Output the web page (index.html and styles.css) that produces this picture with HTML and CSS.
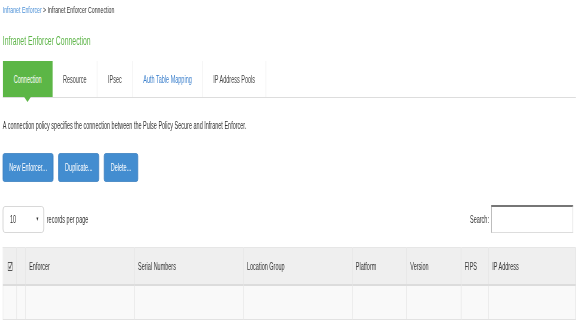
FILE: index.html
```html
<!DOCTYPE html>
<html lang="en">
<head>
    <meta charset="UTF-8">
    <title>Infranet Enforcer Connection</title>
    <link rel="stylesheet" href="styles.css">
</head>
<body>
<div class="frame">
<div class="page">
    <div class="breadcrumb"><a href="#">Infranet Enforcer</a> &gt; Infranet Enforcer Connection</div>

    <h1>Infranet Enforcer Connection</h1>

    <ul class="tabs">
        <li class="active"><a href="#">Connection</a></li>
        <li><a href="#">Resource</a></li>
        <li><a href="#">IPsec</a></li>
        <li class="link"><a href="#">Auth Table Mapping</a></li>
        <li><a href="#">IP Address Pools</a></li>
    </ul>

    <p class="desc">A connection policy specifies the connection between the Pulse Policy Secure and Infranet Enforcer.</p>

    <div class="actions">
        <button class="btn">New Enforcer...</button>
        <button class="btn">Duplicate...</button>
        <button class="btn">Delete...</button>
    </div>

    <div class="controls">
        <div class="length">
            <div class="select"><span>10</span><span class="arrow">&#9660;</span></div>
            <span>records per page</span>
        </div>
        <label class="search">Search: <input type="text"></label>
    </div>

    <table class="grid">
        <thead>
            <tr>
                <th class="col-check">
                    <svg width="9" height="10" viewBox="0 0 9 10">
                        <rect x="0.5" y="1.5" width="8" height="8" fill="none" stroke="#555"/>
                        <path d="M2 5.5 L4 7.5 L8 1" fill="none" stroke="#555" stroke-width="1.2"/>
                    </svg>
                </th>
                <th class="col-expand"></th>
                <th class="col-wide">Enforcer</th>
                <th class="col-wide">Serial Numbers</th>
                <th class="col-wide">Location Group</th>
                <th class="col-mid">Platform</th>
                <th class="col-mid">Version</th>
                <th class="col-fips">FIPS</th>
                <th>IP Address</th>
            </tr>
        </thead>
        <tbody>
            <tr>
                <td></td><td></td><td></td><td></td><td></td><td></td><td></td><td></td><td></td>
            </tr>
        </tbody>
    </table>
</div>
</div>
</body>
</html>
```

FILE: styles.css
```css
html, body {
    margin: 0;
    overflow: hidden;
    background: #fff;
}
body {
    font-family: "Liberation Sans", Arial, sans-serif;
    font-size: 10px;
    color: #333;
}
.frame {
    width: 576px;
    overflow: hidden;
}
.page {
    width: 1047px;
    box-sizing: border-box;
    padding: 4px 0 0 5px;
    transform: scaleX(0.55);
    transform-origin: 0 0;
}
a {
    text-decoration: none;
}
.breadcrumb {
    font-size: 9.5px;
    line-height: 12px;
    color: #333;
}
.breadcrumb a {
    color: #4a8fd6;
}
h1 {
    margin: 17px 0 0;
    font-size: 12.5px;
    line-height: 16px;
    font-weight: normal;
    color: #5fb54a;
}
.tabs {
    list-style: none;
    margin: 12px 0 0;
    padding: 0;
    display: flex;
    border-bottom: 1px solid #ddd;
}
.tabs li {
    height: 36px;
    display: flex;
    align-items: center;
    border-right: 1px solid #eee;
}
.tabs li a {
    padding: 0 19px;
    color: #444;
}
.tabs li.link a {
    color: #3a7fcc;
}
.tabs li.active {
    position: relative;
    background: #5cb646;
    border-right: none;
}
.tabs li.active a {
    color: #fff;
    padding: 0 20px;
}
.tabs li.active::after {
    content: "";
    position: absolute;
    left: 50%;
    top: 100%;
    margin-left: -6px;
    border-left: 6px solid transparent;
    border-right: 6px solid transparent;
    border-top: 5px solid #5cb646;
}
.desc {
    margin: 22px 0 0;
    line-height: 12px;
}
.actions {
    margin-top: 21px;
    display: flex;
    gap: 9px;
}
.btn {
    height: 29px;
    padding: 0 11px;
    font-family: inherit;
    font-size: 10px;
    color: #fff;
    background: #438dd0;
    border: 1px solid #3a7fc0;
    border-radius: 3px;
}
.controls {
    margin-top: 23px;
    padding-right: 5px;
    display: flex;
    justify-content: space-between;
    align-items: center;
}
.length {
    display: flex;
    align-items: center;
    gap: 5px;
}
.select {
    width: 75px;
    height: 27px;
    box-sizing: border-box;
    display: flex;
    align-items: center;
    justify-content: space-between;
    padding: 0 8px 0 12px;
    border: 1px solid #ccc;
    border-radius: 4px;
}
.arrow {
    font-size: 6px;
    color: #333;
}
.search {
    display: flex;
    align-items: center;
    gap: 4px;
}
.search input {
    width: 149px;
    height: 28px;
    box-sizing: border-box;
    margin: 0;
    border: 1px solid;
    border-color: #767676 #ddd #ddd #888;
    border-top-width: 2px;
}
.grid {
    margin-top: 14px;
    width: 100%;
    border-collapse: collapse;
    table-layout: fixed;
    border-top: 1px solid #e6e6e6;
    border-left: 1px solid #e6e6e6;
}
.grid th,
.grid td {
    padding: 0 6px;
    text-align: left;
    font-weight: normal;
    border-right: 1px solid #e2e2e2;
}
.grid th {
    height: 36px;
    background: #efefef;
    border-bottom: 2px solid #dcdcdc;
}
.grid td {
    height: 33px;
    background: #f9f9f9;
    border-bottom: 1px solid #e2e2e2;
}
.grid th.col-check {
    width: 24px;
    padding: 0;
    text-align: center;
}
.grid th.col-check svg {
    display: block;
    margin: 0 auto;
}
.grid th.col-expand {
    width: 15px;
    padding: 0;
}
.col-wide {
    width: 185px;
}
.col-mid {
    width: 86px;
}
.col-fips {
    width: 37px;
}
```
